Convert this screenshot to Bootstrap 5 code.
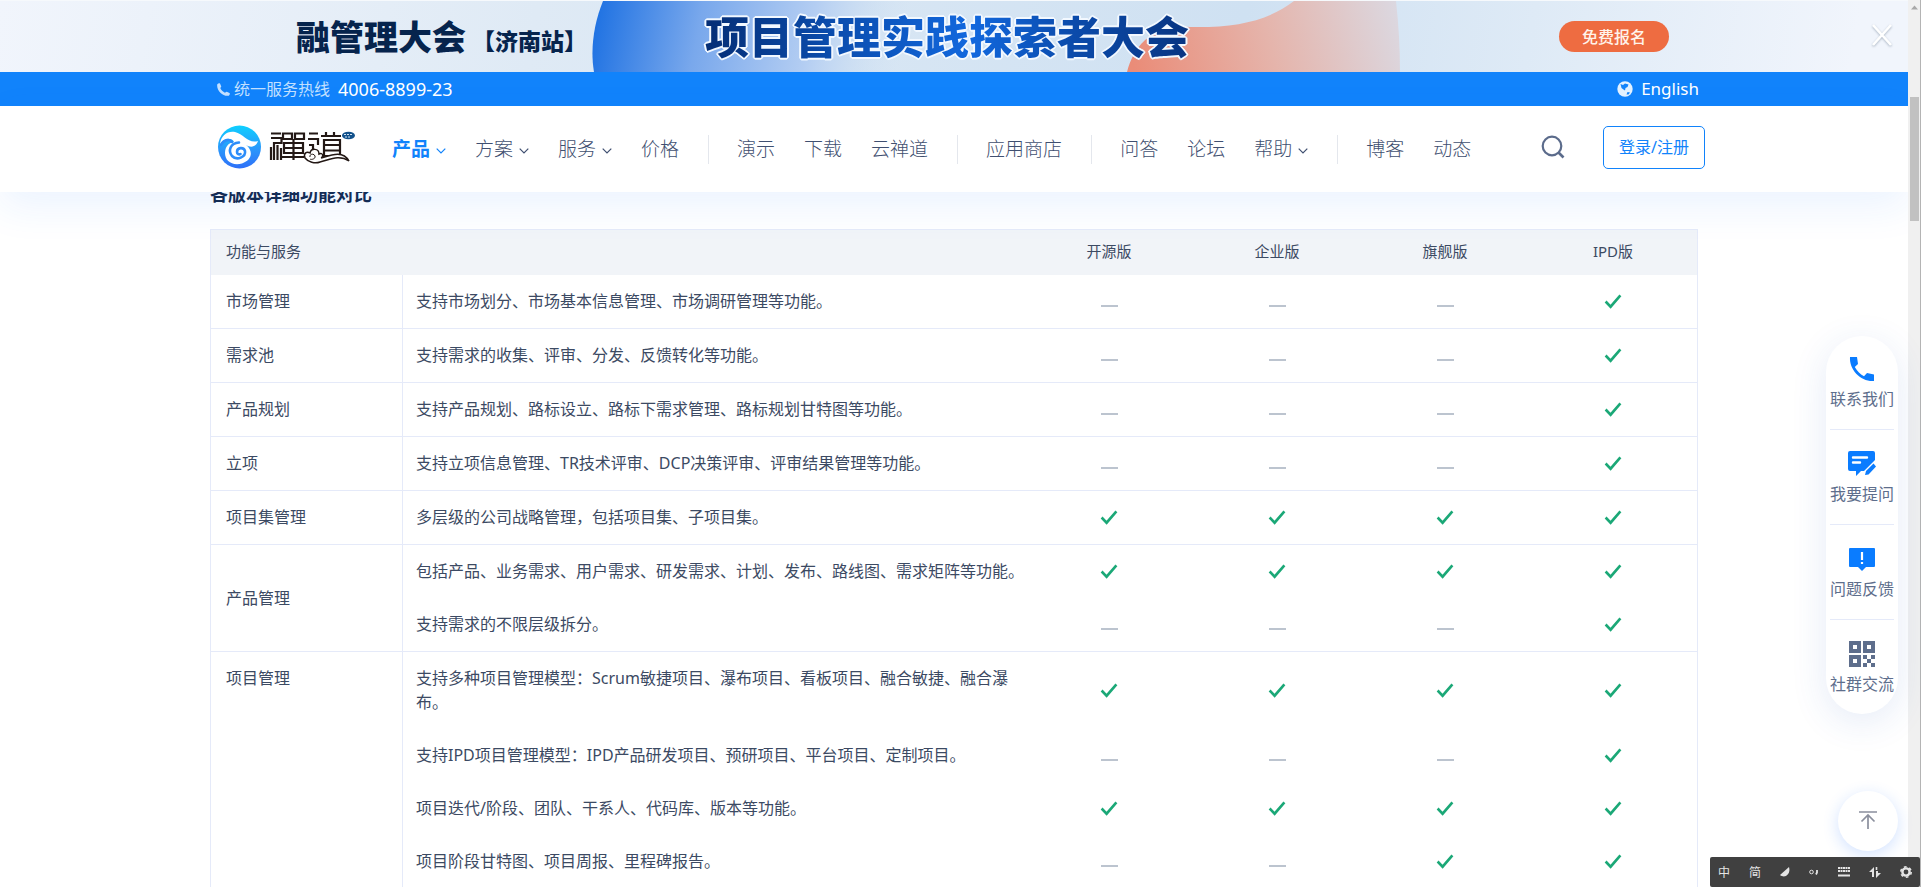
<!DOCTYPE html>
<html lang="zh-CN">
<head>
<meta charset="utf-8">
<meta name="viewport" content="width=device-width, initial-scale=1">
<title>禅道 - 各版本详细功能对比</title>
<link href="https://cdn.jsdelivr.net/npm/bootstrap@5.3.0/dist/css/bootstrap.min.css" rel="stylesheet">
<style>
  :root { --zt-blue: #1183fb; --zt-ink: #3c4a63; --zt-line: #e5eaf9; }
  body { font-family: "Noto Sans", "Noto Sans CJK SC", sans-serif; font-size: 16px; line-height: 24px; color: var(--zt-ink); background: #fff; }
  a { color: inherit; text-decoration: none; }
  .wrap { width: 100%; max-width: 1502px; margin: 0 auto; padding-left: 14px; }

  /* event banner */
  .promo { height: 72px; border-top: 1px solid #f6f9fc; background: linear-gradient(100deg, #f1f5fc 0%, #dfeaf5 28%, #cfe1f2 65%, #deeaf6 80%, #f1f5fc 97%); }
  .promo-art { inset: 0; width: 100%; height: 100%; }
  .promo-name { margin-left: 296px; font-size: 34px; font-weight: 900; color: #06244d; line-height: 40px; }
  .promo-city { margin-left: 6px; padding-top: 8px; font-size: 23px; font-weight: 900; color: #06244d; }
  .promo-title { margin-left: 118px; font-size: 44px; font-weight: 900; line-height: 60px; color: transparent;
    background: linear-gradient(90deg, #052e75 0%, #0a4bab 25%, #1268de 55%, #0b4cad 75%, #083582 100%); -webkit-background-clip: text; background-clip: text;
    filter: drop-shadow(1px 1px 0 #f2f8ff) drop-shadow(-1px -1px 0 #f2f8ff) drop-shadow(1px -1px 0 #f2f8ff) drop-shadow(-1px 1px 0 #f2f8ff); }
  .promo-btn { margin-right: 203px; width: 110px; height: 31px; background: #ee6c41; color: #fff3ea; font-size: 16px; font-weight: 500; }
  .promo-close svg { filter: drop-shadow(0 1px 1px #a9b4c2); }

  .hotline { height: 34px; background: var(--zt-blue); color: #fff; }
  .hotline-num { font-size: 18px; }
  .hotline-lang { font-size: 17px; margin-right: 6px; }
  .pale { color: #c3e0ff; }

  .site-nav { height: 86px; background: #fff; box-shadow: 0 14px 40px rgba(30, 120, 255, .09); }
  .menu { gap: 29px; font-size: 19px; font-weight: 300; color: #3f4f70; margin-left: 35px; padding-top: 4px; }
  .menu .current { color: var(--zt-blue); font-weight: 700; }
  .menu svg { margin-left: 6px; }
  .menu-sep { width: 1px; height: 29px; margin-right: -1px; background: #e4e7ed; }
  .login { width: 102px; height: 43px; margin-left: 38px; border: 1px solid #1183fb; border-radius: 5px; color: #1183fb; background: #fff; }

  .compare { max-width: 1488px; margin: -11px auto 0; }
  .compare h2 { font-size: 18px; line-height: 26px; font-weight: 700; color: #14284b; margin: 0 0 22px; }
  .grid-table { table-layout: fixed; border: 1px solid var(--zt-line); border-collapse: separate; border-spacing: 0; }
  .grid-table th { height: 45px; background: #f1f4f8; font-size: 15px; font-weight: 400; padding: 0 0 4px 15px; }
  .grid-table th.v { padding: 0 0 4px; text-align: center; }
  .grid-table td { padding: 14px 0 15px; vertical-align: middle; }
  .grid-table td.v { text-align: center; padding: 0; }
  .grid-table td.label { padding-left: 15px; border-right: 1px solid var(--zt-line); }
  .grid-table td.desc { padding-left: 13px; }
  .grid-table tbody tr:last-child td, .grid-table td.label { border-bottom: 1px solid var(--zt-line); }
  .dash { display: inline-block; width: 17px; height: 2px; background: #bcc4cf; vertical-align: middle; margin-top: 6px; }

  .dock { right: 23px; top: 336px; width: 72px; border-radius: 36px; background: #fff; padding: 16px 4px; color: #5e6e8c; box-shadow: 0 8px 36px rgba(40, 90, 190, .12); }
  .dock a { height: 95px; padding-top: 4px; white-space: nowrap; }
  .dock a + a { border-top: 1px solid var(--zt-line); padding-top: 21px; }
  .dock a:first-child { height: 77px; }
  .dock a:last-child { height: 79px; }
  .dock svg { display: block; margin: 0 auto 5px; }
  .to-top { right: 23px; top: 791px; width: 60px; height: 60px; border: 0; border-radius: 50%; background: #fff; box-shadow: 0 4px 16px rgba(30, 110, 255, .2); }
  .to-top svg { display: block; margin: 0 auto 3px; }
  .ime { right: 1px; bottom: 0; width: 210px; height: 30px; padding: 0 8px; background: #404040; color: #e4e4e4; border-radius: 2px; font-size: 12px; z-index: 5; }
  .ime span { width: 12px; line-height: 15px; text-align: center; }
  .scroller { width: 13px; background: #f0f0f0; border-right: 1px solid #b4b4b4; }
  .scroller-arrow { display: block; margin: 5px auto 0; }
  .scroller-thumb { width: 9px; height: 124px; margin: 87px 0 0 2px; background: #c1c1c1; }
</style>
</head>
<body>
<svg class="d-none">
  <symbol id="tick" viewBox="0 0 18 16"><path d="M1.600 7.500 6.600 12.700 16.400 1.300" fill="none" stroke="#1ba877" stroke-width="2.600"/></symbol>
  <symbol id="chev" viewBox="0 0 10 6"><path d="M.7.7 5 5 9.300.7" fill="none" stroke="currentColor" stroke-width="1.200"/></symbol>
</svg>
<div class="d-flex vh-100 overflow-hidden position-relative">
  <div class="flex-grow-1 overflow-hidden">
    <section class="promo position-relative">
      <svg class="promo-art position-absolute" viewBox="0 0 1908 71" preserveAspectRatio="none" aria-hidden="true">
        <defs>
          <linearGradient id="wave" x1="592" y1="0" x2="900" y2="60" gradientUnits="userSpaceOnUse"><stop offset="0" stop-color="#1a6fe2"/><stop offset=".35" stop-color="#79a8ec"/><stop offset=".7" stop-color="#b3cdf2"/><stop offset="1" stop-color="#cfe1f2" stop-opacity="0"/></linearGradient>
          <linearGradient id="warm" x1="1135" y1="71" x2="1400" y2="0" gradientUnits="userSpaceOnUse"><stop offset="0" stop-color="#ea8c78"/><stop offset=".5" stop-color="#e5b4ab"/><stop offset="1" stop-color="#dbd9e2"/></linearGradient>
        </defs>
        <path d="M603 0C594 22 590 48 594 71H1000V0Z" fill="url(#wave)"/>
        <path d="M1127 71C1134 46 1150 24 1190 26C1235 27 1268 20 1294 0H1396Q1400 36 1400 71Z" fill="url(#warm)"/>
      </svg>
      <div class="position-relative d-flex align-items-center h-100 text-nowrap">
        <div class="promo-name">融管理大会</div>
        <div class="promo-city">【济南站】</div>
        <div class="promo-title">项目管理实践探索者大会</div>
        <button class="promo-btn btn rounded-pill p-0 border-0 ms-auto" type="button">免费报名</button>
        <button class="promo-close btn p-0 pb-1 border-0 me-3 lh-1" type="button" aria-label="关闭"><svg width="20" height="22" viewBox="0 0 20 22"><path d="M1 1 19 21M19 1 1 21" stroke="#fff" stroke-width="2.600"/></svg></button>
      </div>
    </section>

    <header class="position-relative z-3">
      <div class="hotline">
        <div class="wrap h-100 d-flex align-items-center">
          <svg width="13" height="13" viewBox="0 0 13 13" class="pale me-1"><path d="M.3 1.200C1 .2 2.500-.2 3 .5L4.200 3.200C4.400 4 3.200 4.600 3.300 5.100C4 7 6 9 7.900 9.700C8.400 9.800 9 8.600 9.800 8.800L12.500 10C13.200 10.500 12.800 12 11.800 12.700C6 14-1 7 .3 1.200Z" fill="currentColor"/></svg>
          <span class="pale">统一服务热线</span>
          <span class="hotline-num ms-2">4006-8899-23</span>
          <a href="#" class="hotline-lang ms-auto d-flex align-items-center"><svg class="me-2" width="16" height="16" viewBox="0 0 16 16"><circle cx="8" cy="8" r="7.700" fill="#e3f1ff"/><path d="M3.500 3 6 4 8 2.500 11.500 3.500 10.500 6 8.500 7 8 9.500 6.500 8.500 4.500 7ZM10.500 11 13 11.500 11.500 13.500 9.500 13.500Z" fill="#1183fb"/></svg>English</a>
        </div>
      </div>
      <div class="site-nav">
        <nav class="wrap h-100 d-flex align-items-center text-nowrap pb-1">
          <a href="#" aria-label="禅道">
            <svg width="140" height="44" viewBox="0 0 140 44">
              <defs><linearGradient id="lg" x1="0" y1="0" x2="0" y2="1"><stop offset="0" stop-color="#0fd0ff"/><stop offset=".55" stop-color="#2a97fb"/><stop offset="1" stop-color="#2f70f8"/></linearGradient></defs>
              <circle cx="22.500" cy="22" r="21.500" fill="url(#lg)"/>
              <path d="M3 19C4 10 11 5.500 18 7C27 9 31 19 41 16C39 22 34 23 29 20C36 25 36 35 25 38.500C15 41 8 36 8 28C8 22 11 18 17 17C15 13 8 12 3 19Z" fill="#fff"/>
              <path d="M22 17.500C13 18 11 26 15 31C20 36 29 32 28 26C27 22 20 22 20 27C20 29 22 30 23.500 29M4 20C7 14 13 14 15 17" fill="none" stroke="#2d8dfa" stroke-width="2.600" stroke-linecap="round"/>
              <g fill="none" stroke="#231815" stroke-width="2.200">
                <path d="M54 8.500H64M54 13H64.500V18H57V35M54 35V22M60.500 20V35M64 23V35M66 8.500H75V14H66ZM78 8.500H87V14H78ZM67 18H86V28H67ZM67 23H86M76.500 14V35M64 32H87"/>
                <path d="M92 8.500H101M91 14H101V20M92 20H96V27M104 11H124M109 7V11M117 7V11M107 15H123V31H107ZM107 20H123M107 25.500H123"/>
              </g>
              <path d="M88 33C86 28 90 26 93 28C94 23 102 23 102 29C106 27 107 32 104 33C114 30 126 25 132 36C122 29 112 35 103 37C98 39 91 37 88 33Z" fill="#fff" stroke="#231815" stroke-width="1.500"/>
              <path d="M93 32C92 29 97 28 98 31S94 35 93 34" fill="none" stroke="#231815"/>
              <ellipse cx="131.500" cy="10.500" rx="6.500" ry="3.800" fill="#13528c"/><path d="M127 9.500H136M128 12H134" stroke="#cfe2f2" stroke-dasharray="2 1"/>
            </svg>
          </a>
          <div class="menu d-flex align-items-center">
            <a href="#" class="current">产品<svg width="10" height="6"><use href="#chev"/></svg></a>
            <a href="#">方案<svg width="10" height="6"><use href="#chev"/></svg></a>
            <a href="#">服务<svg width="10" height="6"><use href="#chev"/></svg></a>
            <a href="#">价格</a>
            <span class="menu-sep"></span>
            <a href="#">演示</a><a href="#">下载</a><a href="#">云禅道</a>
            <span class="menu-sep"></span>
            <a href="#">应用商店</a>
            <span class="menu-sep"></span>
            <a href="#">问答</a><a href="#">论坛</a><a href="#">帮助<svg width="10" height="6"><use href="#chev"/></svg></a>
            <span class="menu-sep"></span>
            <a href="#">博客</a><a href="#">动态</a>
          </div>
          <button class="btn p-0 border-0 ms-auto lh-1" type="button" aria-label="搜索"><svg width="24" height="24" viewBox="0 0 24 24"><circle cx="11" cy="11" r="9.300" fill="none" stroke="#5b6b8b" stroke-width="2.200"/><path d="M17.500 17.500 22.500 22.500" stroke="#5b6b8b" stroke-width="2.600"/></svg></button>
          <button class="login p-0" type="button">登录/注册</button>
        </nav>
      </div>
    </header>

    <main class="compare">
      <h2>各版本详细功能对比</h2>
      <table class="grid-table w-100">
        <colgroup><col style="width:192px"><col><col style="width:168px"><col style="width:168px"><col style="width:168px"><col style="width:168px"></colgroup>
        <thead><tr><th colspan="2">功能与服务</th><th class="v">开源版</th><th class="v">企业版</th><th class="v">旗舰版</th><th class="v">IPD版</th></tr></thead>
      </table>
    </main>
  </div>

  <div class="scroller flex-shrink-0" aria-hidden="true">
    <svg class="scroller-arrow" width="7" height="5"><path d="M0 4.500 3.500.5 7 4.500Z" fill="#a8a8a8"/></svg>
    <div class="scroller-thumb"></div>
  </div>

  <aside class="dock position-absolute text-center">
    <a href="#" class="d-block"><svg width="26" height="26" viewBox="0 0 26 26"><path d="M1 1H8L9 8 5.800 11C8 15 11 18 15 20.200L18 17 25 18.400V25C12 26 0 14 1 1Z" fill="#0a7cff"/></svg>联系我们</a>
    <a href="#" class="d-block"><svg width="28" height="26" viewBox="0 0 28 26"><path d="M2 0H25Q27 0 27 2V9L16 20H13L8 25V20H2Q0 20 0 18V2Q0 0 2 0Z" fill="#0a7cff"/><path d="M5 6.500H19M5 11.500H12" stroke="#fff" stroke-width="2.400" stroke-linecap="round"/><path d="M17 24 18 20 25.500 12.500 28 15.500 20.500 23.500Z" fill="#0a7cff"/></svg>我要提问</a>
    <a href="#" class="d-block"><svg width="26" height="26" viewBox="0 0 26 26"><path d="M1 2H25Q26 2 26 3V20Q26 21 25 21H17L13 25 9 21H1Q0 21 0 20V3Q0 2 1 2Z" fill="#0a7cff"/><path d="M13 6V14M13 16V18" stroke="#fff" stroke-width="2.200"/></svg>问题反馈</a>
    <a href="#" class="d-block"><svg width="26" height="26" viewBox="0 0 26 26" fill="#5e6e8c" fill-rule="evenodd"><path d="M0 0H12V12H0ZM4 4V8H8V4ZM14 0H26V12H14ZM18 4V8H22V4ZM0 14H12V26H0ZM4 18V22H8V18ZM14 14H18V18H14ZM18 18H22V22H18ZM22 14H26V18H22ZM14 22H18V26H14ZM22 22H26V26H22Z"/></svg>社群交流</a>
  </aside>
  <button class="to-top position-absolute p-0" type="button" aria-label="返回顶部"><svg width="18" height="18" viewBox="0 0 18 18" fill="none" stroke="#8b8f9d" stroke-width="1.700"><path d="M0 1H18M9 18V4M2.500 10.500 9 4 15.500 10.500"/></svg></button>
  <div class="ime position-absolute d-flex align-items-center justify-content-between">
    <span>中</span><span>简</span>
    <svg width="10" height="10"><path d="M9 0C11 7 5 12 0 8Z" fill="#e4e4e4"/></svg>
    <svg width="10" height="8"><circle cx="2.500" cy="4" r="1.800" fill="none" stroke="#e4e4e4"/><path d="M8 2V4.500L7 6.500" stroke="#e4e4e4" stroke-width="1.800" fill="none"/></svg>
    <svg width="12" height="10"><path d="M0 1H12M0 4H12" stroke="#e4e4e4" stroke-width="2" stroke-dasharray="2 .5"/><path d="M0 8.500H12" stroke="#e4e4e4" stroke-width="2"/></svg>
    <svg width="12" height="12"><path d="M0 6 5 1V11H3V6ZM12 7 7 12V5H9V7Z" fill="#e4e4e4"/><path d="M7.500 1V4" stroke="#e4e4e4" stroke-width="1.600"/></svg>
    <svg width="12" height="12"><circle cx="6" cy="6" r="3.600" fill="none" stroke="#e4e4e4" stroke-width="2.400"/><circle cx="6" cy="6" r="5.200" fill="none" stroke="#e4e4e4" stroke-width="1.600" stroke-dasharray="2.700 2.740"/></svg>
  </div>
</div>
<script src="https://cdn.jsdelivr.net/npm/bootstrap@5.3.0/dist/js/bootstrap.bundle.min.js"></script>
<script>
  // Each group is a feature area; "1" marks an edition that includes the feature.
  const groups = [
    ['市场管理', [['支持市场划分、市场基本信息管理、市场调研管理等功能。', '0001']]],
    ['需求池', [['支持需求的收集、评审、分发、反馈转化等功能。', '0001']]],
    ['产品规划', [['支持产品规划、路标设立、路标下需求管理、路标规划甘特图等功能。', '0001']]],
    ['立项', [['支持立项信息管理、TR技术评审、DCP决策评审、评审结果管理等功能。', '0001']]],
    ['项目集管理', [['多层级的公司战略管理，包括项目集、子项目集。', '1111']]],
    ['产品管理', [['包括产品、业务需求、用户需求、研发需求、计划、发布、路线图、需求矩阵等功能。', '1111'], ['支持需求的不限层级拆分。', '0001']]],
    ['项目管理', [['支持多种项目管理模型：Scrum敏捷项目、瀑布项目、看板项目、融合敏捷、融合瀑布。', '1111'], ['支持IPD项目管理模型：IPD产品研发项目、预研项目、平台项目、定制项目。', '0001'], ['项目迭代/阶段、团队、干系人、代码库、版本等功能。', '1111'], ['项目阶段甘特图、项目周报、里程碑报告。', '0011']], 'align-top']
  ];
  const tick = '<svg class="d-block mx-auto" width="18" height="16" role="img" aria-label="支持"><use href="#tick"/></svg>';
  const dash = '<span class="dash" role="img" aria-label="不支持"></span>';
  document.querySelector('.grid-table').insertAdjacentHTML('beforeend', groups.map(([name, rows, align = 'align-middle']) =>
    '<tbody>' + rows.map(([text, marks], i) => '<tr>' +
      (i ? '' : `<td class="label ${align}" rowspan="${rows.length}">${name}</td>`) +
      `<td class="desc">${text}</td>` +
      [...marks].map(m => `<td class="v">${m === '1' ? tick : dash}</td>`).join('') + '</tr>').join('') + '</tbody>').join(''));
</script>
</body>
</html>
